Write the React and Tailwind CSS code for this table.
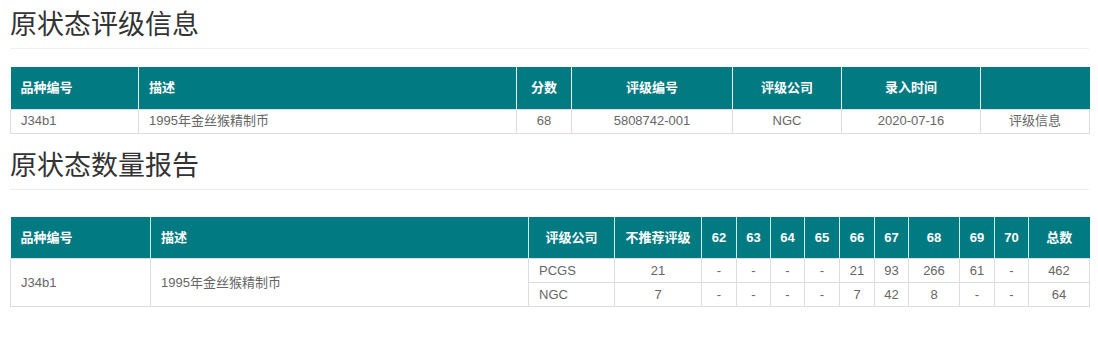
import React from 'react';

const font = { fontFamily: '"Liberation Sans", "Noto Sans CJK SC", sans-serif' };

const gradeRows = [
  { company: 'PCGS', notRec: '21', grades: ['-', '-', '-', '-', '21', '93', '266', '61', '-'], total: '462' },
  { company: 'NGC', notRec: '7', grades: ['-', '-', '-', '-', '7', '42', '8', '-', '-'], total: '64' },
];

const gradeCols = [
  { label: '62', w: 'w-[35px]' },
  { label: '63', w: 'w-[34px]' },
  { label: '64', w: 'w-[34px]' },
  { label: '65', w: 'w-[35px]' },
  { label: '66', w: 'w-[35px]' },
  { label: '67', w: 'w-[34px]' },
  { label: '68', w: 'w-[51px]' },
  { label: '69', w: 'w-[35px]' },
  { label: '70', w: 'w-[34px]' },
];

function Title({ children }) {
  return (
    <div className="border-b border-[#eeeeee] pb-[8px]">
      <h2 className="text-[27px] leading-[30px] text-[#333333] font-normal">{children}</h2>
    </div>
  );
}

export default function App() {
  return (
    <div className="bg-white min-h-screen pl-[10px] pr-[9px] pt-[10px]" style={font}>
      <Title>原状态评级信息</Title>

      <table className="mt-[18px] w-full table-fixed border-collapse text-[13px]">
        <thead>
          <tr className="bg-[#027a82] text-white font-bold h-[42px]">
            <th className="w-[128px] text-left pl-[10px] border-r border-[#e8f4f4]">品种编号</th>
            <th className="w-[378px] text-left pl-[10px] border-r border-[#e8f4f4]">描述</th>
            <th className="w-[55px] text-center border-r border-[#e8f4f4]">分数</th>
            <th className="w-[161px] text-center border-r border-[#e8f4f4]">评级编号</th>
            <th className="w-[109px] text-center border-r border-[#e8f4f4]">评级公司</th>
            <th className="w-[139px] text-center border-r border-[#e8f4f4]">录入时间</th>
            <th className="w-[109px]"></th>
          </tr>
        </thead>
        <tbody className="text-[#666666]">
          <tr className="h-[24px]">
            <td className="pl-[10px] border border-[#dddddd]">J34b1</td>
            <td className="pl-[10px] border border-[#dddddd]">1995年金丝猴精制币</td>
            <td className="text-center border border-[#e8d8dc]">68</td>
            <td className="text-center border border-[#e8d8dc]">5808742-001</td>
            <td className="text-center border border-[#dddddd]">NGC</td>
            <td className="text-center border border-[#dddddd]">2020-07-16</td>
            <td className="text-center border border-[#dddddd]">评级信息</td>
          </tr>
        </tbody>
      </table>

      <div className="mt-[17px]">
        <Title>原状态数量报告</Title>
      </div>

      <table className="mt-[27px] w-full table-fixed border-collapse text-[13px]">
        <thead>
          <tr className="bg-[#027a82] text-white font-bold h-[42px]">
            <th className="w-[140px] text-left pl-[10px] border-r border-[#cdeef0]">品种编号</th>
            <th className="w-[378px] text-left pl-[10px] border-r border-[#cdeef0]">描述</th>
            <th className="w-[86px] text-center border-r border-[#cdeef0]">评级公司</th>
            <th className="w-[87px] text-center border-r border-[#cdeef0]">不推荐评级</th>
            {gradeCols.map((c) => (
              <th key={c.label} className={`${c.w} text-center border-r border-[#cdeef0]`}>
                {c.label}
              </th>
            ))}
            <th className="w-[61px] text-center">总数</th>
          </tr>
        </thead>
        <tbody className="text-[#666666]">
          {gradeRows.map((r, i) => (
            <tr key={r.company} className="h-[24px]">
              {i === 0 && (
                <>
                  <td rowSpan={2} className="pl-[10px] border border-[#dddddd]">J34b1</td>
                  <td rowSpan={2} className="pl-[10px] border border-[#dddddd]">1995年金丝猴精制币</td>
                </>
              )}
              <td className="pl-[10px] border border-[#dddddd]">{r.company}</td>
              <td className="text-center border border-[#dddddd]">{r.notRec}</td>
              {r.grades.map((g, j) => (
                <td key={j} className="text-center border border-[#dddddd]">{g}</td>
              ))}
              <td className="text-center border border-[#dddddd]">{r.total}</td>
            </tr>
          ))}
        </tbody>
      </table>
    </div>
  );
}
